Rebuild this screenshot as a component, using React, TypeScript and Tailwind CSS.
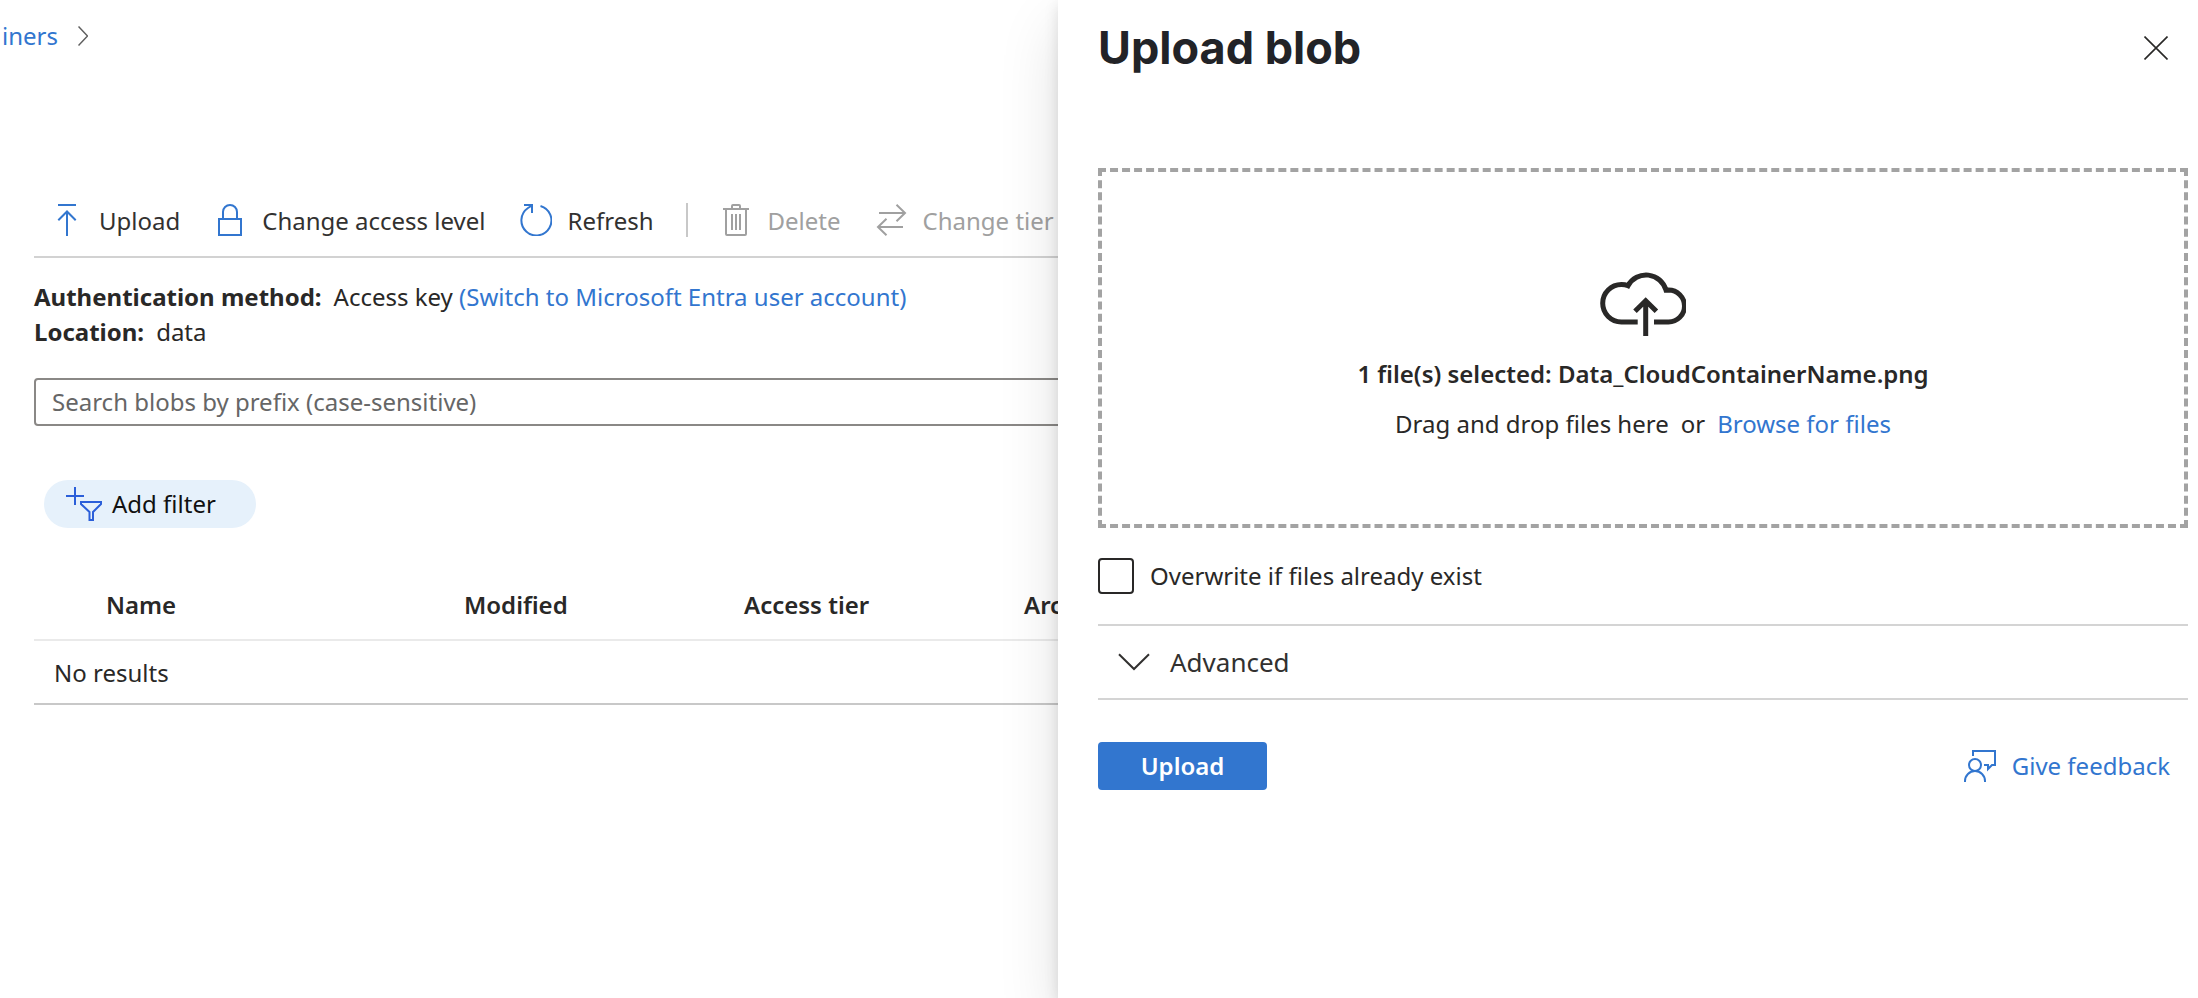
import type { ReactNode } from "react";

function Icon({ children, className = "" }: { children: ReactNode; className?: string }) {
  return (
    <svg
      viewBox="0 0 32 32"
      className={`size-8 shrink-0 ${className}`}
      fill="none"
      stroke="currentColor"
      strokeWidth="2"
      aria-hidden="true"
    >
      {children}
    </svg>
  );
}

const UploadIcon = () => (
  <Icon className="text-[#3276cf]">
    <path d="M7 1H25M16 7V32M7.3 16.2L16 7.5L24.7 16.2" />
  </Icon>
);

const LockIcon = () => (
  <Icon className="text-[#3276cf]">
    <path d="M5 15H27V31H5ZM9 15V8A7 7 0 0 1 23 8V15" />
  </Icon>
);

const RefreshIcon = () => (
  <Icon className="text-[#3276cf]">
    <path d="M20.5 2A15 15 0 1 1 8 4L12 1.5M4 1H12V9" />
  </Icon>
);

const TrashIcon = () => (
  <Icon>
    <path d="M3 5H29M12 5V2Q12 1 13 1H19Q20 1 20 2V5M6 5V30Q6 31 7 31H25Q26 31 26 30V5" />
    <path d="M12 10V26M16 10V26M20 10V26" />
  </Icon>
);

const SwapIcon = () => (
  <Icon>
    <path d="M4 9H30M21.5 0.8L30 9L21.5 17.2M28 23H3M11.5 14.8L3 23L11.5 31.2" />
  </Icon>
);

const FeedbackIcon = () => (
  <Icon>
    <path d="M9 6V1H31V15H28L24 19V15H20" />
    <circle cx="11" cy="15" r="6" />
    <path d="M1 32V31A10 10 0 0 1 21 31V32" />
  </Icon>
);

const AddFilterIcon = () => (
  <svg viewBox="0 0 36 34" className="h-[34px] w-9 shrink-0 text-[#2b5fd9]" fill="none" stroke="currentColor" strokeWidth="2" aria-hidden="true">
    <path d="M0 9H18M9 0V18" />
    <path d="M15 15H35V17L27 25V33H23.5V25L15 17Z" />
  </svg>
);

const CloudUploadIcon = () => (
  <svg viewBox="0 0 86 65" className="h-[65px] w-[86px]" fill="none" stroke="currentColor" strokeWidth="5" aria-hidden="true">
    <path d="M37.7 51H21.4A18.7 18.7 0 0 1 21.4 13.6Q25 13.6 28 14.8A20.6 20.6 0 0 1 66 19.2L68.5 19A16 16 0 0 1 68.5 51H54" />
    <path d="M45.7 65V30M35 40.3L45.7 29.7L56.4 40.3" />
  </svg>
);

function Command({ icon, label, disabled = false }: { icon: ReactNode; label: string; disabled?: boolean }) {
  return (
    <button
      type="button"
      disabled={disabled}
      className="flex items-center gap-4 px-[17px] text-[#323130] disabled:text-[#a0a0a0]"
    >
      {icon}
      <span className="pt-0.5">{label}</span>
    </button>
  );
}

const columns = ["Name", "Modified", "Access tier", "Archive status"];

function Container() {
  return (
    <main className="min-w-0 flex-1 overflow-hidden whitespace-nowrap">
      <div className="min-w-[1240px]">
        <nav aria-label="Breadcrumb" className="flex h-[72px] items-center gap-5 pl-0.5">
          <a href="#containers" className="text-[#3276cf]">iners</a>
          <svg viewBox="0 0 10 20" className="h-5 w-2.5" fill="none" stroke="#5f5f5f" strokeWidth="1.5" aria-hidden="true">
            <path d="M0.5 0.5L9.5 10L0.5 19.5" />
          </svg>
        </nav>

        <div className="mt-28 pl-[34px]">
          <div role="toolbar" aria-label="Commands" className="flex h-[74px] items-center border-b-2 border-[#d2d2d2]">
            <Command icon={<UploadIcon />} label="Upload" />
            <Command icon={<LockIcon />} label="Change access level" />
            <Command icon={<RefreshIcon />} label="Refresh" />
            <div className="mx-[15px] h-[34px] w-0.5 bg-[#c8c8c8]" />
            <Command icon={<TrashIcon />} label="Delete" disabled />
            <Command icon={<SwapIcon />} label="Change tier" disabled />
          </div>

          <dl className="mt-[21px] leading-[35px] text-[#292827]">
            <div className="flex gap-3">
              <dt className="font-bold">Authentication method:</dt>
              <dd>
                Access key{" "}
                <a href="#switch" className="text-[#3276cf]">(Switch to Microsoft Entra user account)</a>
              </dd>
            </div>
            <div className="flex gap-3">
              <dt className="font-bold">Location:</dt>
              <dd>data</dd>
            </div>
          </dl>

          <input
            type="search"
            aria-label="Search blobs"
            placeholder="Search blobs by prefix (case-sensitive)"
            className="mt-[29px] block h-12 w-full rounded border-2 border-[#8a8886] bg-white px-4 pb-0.5 outline-none placeholder:text-[#666666]"
          />

          <button type="button" className="mt-[54px] ml-2.5 flex h-12 items-center gap-2.5 rounded-full bg-[#e6f1fb] pr-10 pl-[22px] text-[#111111]">
            <AddFilterIcon />
            Add filter
          </button>

          <table className="mt-[42px] w-full table-fixed border-collapse text-left text-[#292827]">
            <colgroup>
              <col className="w-[430px]" />
              <col className="w-[280px]" />
              <col className="w-[280px]" />
              <col />
            </colgroup>
            <thead>
              <tr className="h-[70px] border-b-2 border-[#eaeaea]">
                {columns.map((name) => (
                  <th key={name} scope="col" className="p-0 font-semibold first:pl-[72px]">{name}</th>
                ))}
              </tr>
            </thead>
            <tbody>
              <tr className="h-16 border-b-2 border-[#c8c8c8]">
                <td colSpan={4} className="pt-0.5 pl-5">No results</td>
              </tr>
            </tbody>
          </table>
        </div>
      </div>
    </main>
  );
}

function UploadPanel() {
  return (
    <aside aria-label="Upload blob" className="relative z-10 w-[1140px] max-w-full shrink-0 bg-white pr-2.5 pl-10 text-[#292827] shadow-[0_26px_58px_rgba(0,0,0,0.12),0_5px_14px_rgba(0,0,0,0.12)]">
      <header className="flex h-24 items-center justify-between pr-5">
        <h1 className="font-['Inter',sans-serif] text-[45px] leading-[56px] font-bold text-[#222327]">Upload blob</h1>
        <button type="button" aria-label="Close">
          <svg viewBox="0 0 24 24" className="size-6" fill="none" stroke="currentColor" strokeWidth="1.6" aria-hidden="true">
            <path d="M0.5 0.5L23.5 23.5M23.5 0.5L0.5 23.5" />
          </svg>
        </button>
      </header>

      <section className="mt-[72px] flex h-[360px] flex-col items-center justify-center border-4 border-dashed border-[#a3a3a3] pt-4 leading-9">
        <CloudUploadIcon />
        <p className="mt-5 font-semibold">1 file(s) selected: Data_CloudContainerName.png</p>
        <p className="mt-3.5 flex gap-3">
          <span>Drag and drop files here</span>
          <span>or</span>
          <a href="#browse" className="text-[#3276cf]">Browse for files</a>
        </p>
      </section>

      <label className="mt-[30px] flex h-9 items-center gap-4">
        <input type="checkbox" className="size-9 appearance-none rounded border-2 border-[#292827] bg-white checked:bg-[#3276cf]" />
        Overwrite if files already exist
      </label>

      <button type="button" className="mt-[30px] flex h-[76px] w-full items-center gap-5 border-y-2 border-[#d4d4d4] px-5 text-[26px] text-[#323130]">
        <svg viewBox="0 0 32 18" className="h-[18px] w-8" fill="none" stroke="currentColor" strokeWidth="2" aria-hidden="true">
          <path d="M1 1.3L16 16L31 1.3" />
        </svg>
        Advanced
      </button>

      <footer className="mt-[42px] flex items-center justify-between pr-[18px]">
        <button type="submit" className="h-12 w-[169px] rounded bg-[#3276cf] font-semibold text-white">Upload</button>
        <a href="#feedback" className="flex items-center gap-4 text-[#3276cf]">
          <FeedbackIcon />
          Give feedback
        </a>
      </footer>
    </aside>
  );
}

export default function App() {
  return (
    <div className="flex min-h-screen bg-white font-['Noto_Sans','Open_Sans',sans-serif] text-2xl">
      <Container />
      <UploadPanel />
    </div>
  );
}
